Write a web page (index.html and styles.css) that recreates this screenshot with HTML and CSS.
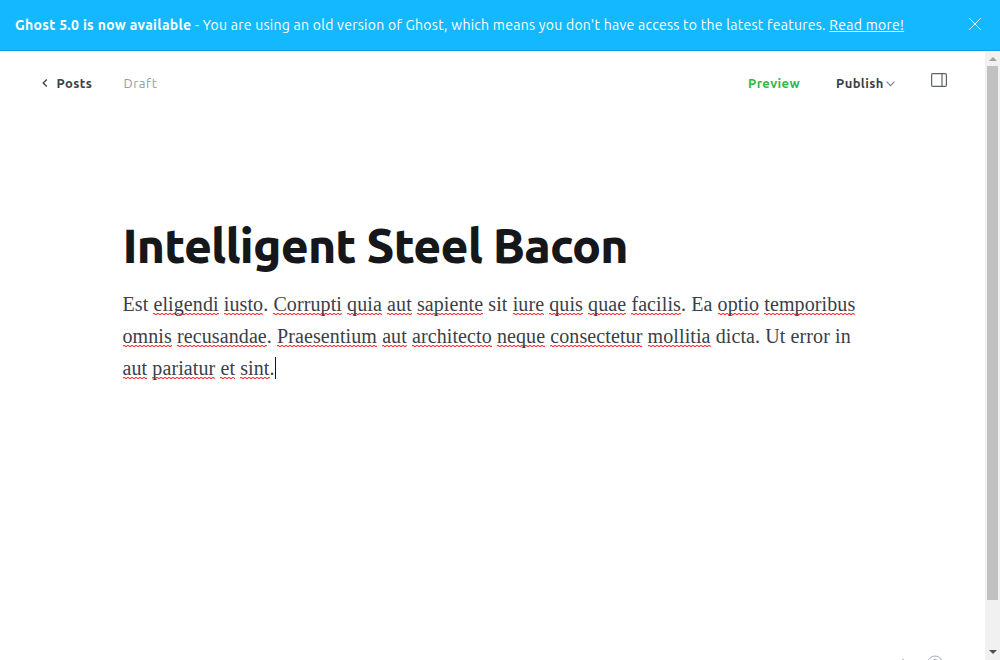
FILE: index.html
```html
<!DOCTYPE html>
<html lang="en">
<head>
<meta charset="utf-8">
<title>Editor</title>
<link rel="stylesheet" href="styles.css">
</head>
<body>
<div class="app">
  <aside class="alert">
    <p class="alert-text"><b class="alert-lead">Ghost 5.0 is now available</b> - You are using an old version of Ghost, which means you don't have access to the latest features. <a class="alert-link">Read more!</a></p>
    <svg class="alert-close" width="12" height="12" viewBox="0 0 12 12"><path d="M.2.2l11.6 11.6M11.8.2L.2 11.8"/></svg>
  </aside>
  <div class="main">
    <div class="editor">
      <header class="toolbar">
        <svg class="back" width="6" height="8" viewBox="0 0 6 8"><path d="M4.8.5L1.2 4l3.6 3.5"/></svg>
        <span class="posts">Posts</span>
        <span class="status">Draft</span>
        <span class="preview">Preview</span>
        <span class="publish">Publish</span>
        <svg class="chevron" width="9" height="6" viewBox="0 0 9 6"><path d="M.6.7l3.9 4 3.9-4"/></svg>
        <svg class="panel" width="16" height="14" viewBox="0 0 16 14"><rect x=".6" y=".6" width="14.8" height="12.8" rx="1.2"/><path d="M11 .6v12.8"/></svg>
      </header>
      <article class="content">
        <h1 class="title">Intelligent Steel Bacon</h1>
        <p class="body">Est <u>eligendi</u> <u>iusto</u>. <u>Corrupti</u> <u>quia</u> <u>aut</u> <u>sapiente</u> sit <u>iure</u> <u>quis</u> <u>quae</u> <u>facilis</u>. Ea <u>optio</u> <u>temporibus</u><br><u>omnis</u> <u>recusandae</u>. <u>Praesentium</u> <u>aut</u> <u>architecto</u> <u>neque</u> <u>consectetur</u> <u>mollitia</u> dicta. Ut error in<br><u>aut</u> <u>pariatur</u> <u>et</u> <u>sint</u>.<span class="caret"></span></p>
      </article>
      <footer class="footer">
        <svg width="48" height="5" viewBox="0 0 48 5"><path class="tick" d="M4 4v1"/><circle class="help" cx="36" cy="8.5" r="7.5"/><path class="help" d="M34.5 4.5h3"/></svg>
      </footer>
    </div>
    <div class="scrollbar">
      <svg class="arrow-up" width="8" height="4" viewBox="0 0 8 4"><path d="M4 0l4 4H0z"/></svg>
      <div class="thumb"></div>
      <svg class="arrow-down" width="8" height="4" viewBox="0 0 8 4"><path d="M0 0h8L4 4z"/></svg>
    </div>
  </div>
</div>
</body>
</html>
```
FILE: styles.css
```css
* { box-sizing: border-box; }
body { margin: 0; background: #fff; font-family: Ubuntu, "Noto Sans", sans-serif; letter-spacing: .1px; overflow: hidden; }
.app { height: 660px; display: flex; flex-direction: column; }
.alert { height: 51px; flex: none; display: flex; justify-content: space-between; align-items: flex-start; padding: 0 19px 0 15px; background: #14b8ff; border-bottom: 1px solid #0a9ee0; color: #fff; }
.alert-text { margin: 15px 0 0; font-size: 14px; line-height: 20px; letter-spacing: .27px; white-space: nowrap; }
.alert-lead { letter-spacing: .31px; }
.alert-link { text-decoration: underline; }
.alert-close { margin-top: 18px; fill: none; stroke: #fff; stroke-width: .9; }
.main { flex: 1; display: flex; min-height: 0; }
.editor { flex: 1; display: flex; flex-direction: column; }
.toolbar { height: 64px; display: flex; align-items: center; padding-left: 42px; font-size: 13px; line-height: 20px; font-weight: 600; letter-spacing: .4px; color: #394047; white-space: nowrap; }
.toolbar svg { fill: none; stroke: #394047; flex: none; }
.back { stroke-width: 1.3; }
.posts { width: 35px; margin-left: 8.5px; }
.status { width: 34px; margin-left: 32px; font-weight: 400; letter-spacing: .6px; color: #8e9cac; }
.preview { width: 52px; margin-left: auto; color: #30b944; }
.publish { width: 48px; margin-left: 36px; }
.toolbar .chevron { margin: 2px 0 0 2px; stroke: #7c858d; stroke-width: 1.2; }
.toolbar .panel { margin: -6px 38px 0 36px; stroke: #5b636b; stroke-width: 1.2; }
.content { padding: 100px 0 0 122.5px; flex: 1; }
.title { margin: 0; font-size: 48px; line-height: 60px; font-weight: 800; letter-spacing: -.8px; color: #15171a; white-space: nowrap; }
.body { margin: 13px 0 0; font-family: "Liberation Serif", serif; font-size: 20px; line-height: 32px; color: #394047; white-space: nowrap; }
.body u { padding-bottom: 2px; text-decoration: none; background: repeating-linear-gradient(90deg, #ff3b3b 0 2px, #ffc4c4 2px 4px) 0 20px / 100% 1px no-repeat, repeating-linear-gradient(90deg, #ffc4c4 0 2px, #ff3b3b 2px 4px) 0 21px / 100% 1px no-repeat; }
.caret { display: inline-block; width: 1px; height: 22px; margin-left: .5px; vertical-align: -4px; background: #15171a; }
.footer { height: 5px; padding-left: 899px; line-height: 0; }
.footer svg { display: block; }
.tick { stroke: #7c858d; }
.help { fill: none; stroke: #a5b0bb; }
.scrollbar { width: 15px; display: flex; flex-direction: column; align-items: center; background: #f1f1f1; }
.arrow-up { margin-top: 6px; fill: #a3a3a3; }
.thumb { width: 11px; height: 534px; margin-top: 5px; background: #c1c1c1; }
.arrow-down { margin: auto 0 6px; fill: #505050; }
```
